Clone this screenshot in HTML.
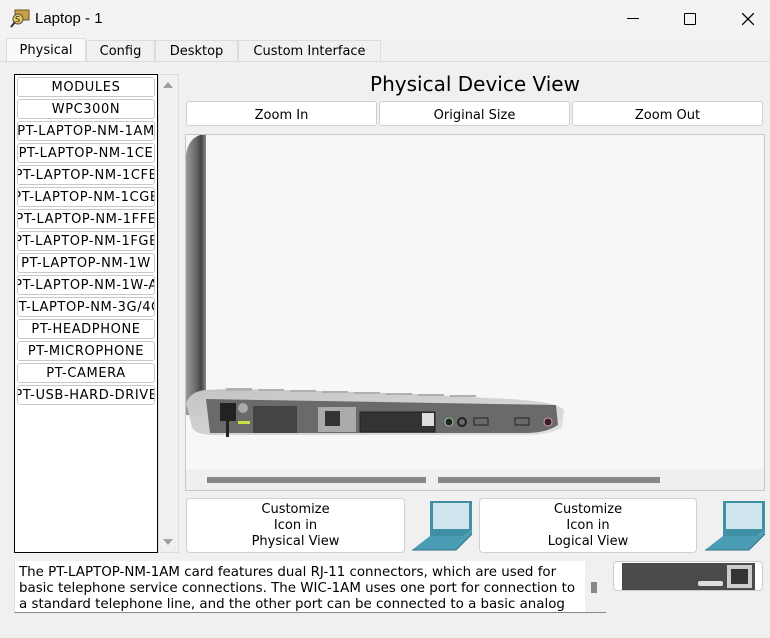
<!DOCTYPE html>
<html><head><style>
*{box-sizing:border-box;margin:0;padding:0}
body{width:770px;height:638px;background:#f0f0f0;font-family:"DejaVu Sans","Liberation Sans",sans-serif;position:relative;overflow:hidden;color:#000}
.a{position:absolute}
.title{left:0;top:0;width:770px;height:40px;background:#f3f3f3}
.tab{top:40px;height:22px;font-size:13px;text-align:center;line-height:21px;border:1px solid #dcdcdc;border-bottom:none;background:#f0f0f0;font-family:"DejaVu Sans",sans-serif}
.item{left:17px;width:138px;height:20px;border:1px solid #c8c8c8;border-radius:3px;background:#fff;font-size:13px;letter-spacing:0.6px;text-align:center;line-height:20px;white-space:nowrap;overflow:hidden;display:flex;justify-content:center}
.btn{height:25px;border:1px solid #d0d0d0;border-radius:3px;background:#fff;font-size:13px;text-align:center;line-height:27px}
.cbtn{height:55px;border:1px solid #d0d0d0;border-radius:4px;background:#fff;font-size:13px;text-align:center;line-height:16px;padding-top:3px}
</style></head><body>
<div class="a title"></div>
<svg class="a" style="left:10px;top:8px" width="22" height="22" viewBox="0 0 22 22"><rect x="5" y="2" width="14" height="10" fill="#c9a04a" stroke="#6b5420"/><circle cx="8" cy="11" r="5" fill="#e8c860" stroke="#555"/><line x1="5" y1="14" x2="1" y2="19" stroke="#333" stroke-width="2"/><text x="5" y="14" font-size="8" fill="#222" font-family="DejaVu Sans">S</text></svg>
<div class="a" style="left:35px;top:10px;font-size:15px;font-family:'Liberation Sans',sans-serif">Laptop - 1</div>
<div class="a" style="left:627px;top:18px;width:12px;height:1px;background:#000"></div>
<div class="a" style="left:684px;top:13px;width:12px;height:12px;border:1.3px solid #000;border-radius:1px"></div>
<svg class="a" style="left:742px;top:13px" width="12" height="12"><path d="M0 0L12 12M12 0L0 12" stroke="#000" stroke-width="1.3"/></svg>
<div class="a tab" style="left:6px;top:38px;height:24px;width:80px;background:#f9f9f9;line-height:24px">Physical</div>
<div class="a tab" style="left:86px;width:69px">Config</div>
<div class="a tab" style="left:155px;width:83px">Desktop</div>
<div class="a tab" style="left:238px;width:143px">Custom Interface</div>
<div class="a" style="left:0;top:61px;width:770px;height:1px;background:#dcdcdc"></div>

<div class="a" style="left:14px;top:74px;width:144px;height:479px;border:1px solid #000;background:#fff"></div>
<div class="a" style="left:158px;top:74px;width:21px;height:479px;background:#f0f0f0;border:1px solid #dcdcdc"></div>
<svg class="a" style="left:162px;top:81px" width="12" height="8"><path d="M1 7L6 1L11 7Z" fill="#a0a0a0"/></svg>
<svg class="a" style="left:162px;top:538px" width="12" height="8"><path d="M1 1L6 7L11 1Z" fill="#a0a0a0"/></svg>
<div class="a item" style="top:77px">MODULES</div>
<div class="a item" style="top:99px">WPC300N</div>
<div class="a item" style="top:121px">PT-LAPTOP-NM-1AM</div>
<div class="a item" style="top:143px">PT-LAPTOP-NM-1CE</div>
<div class="a item" style="top:165px">PT-LAPTOP-NM-1CFE</div>
<div class="a item" style="top:187px">PT-LAPTOP-NM-1CGE</div>
<div class="a item" style="top:209px">PT-LAPTOP-NM-1FFE</div>
<div class="a item" style="top:231px">PT-LAPTOP-NM-1FGE</div>
<div class="a item" style="top:253px">PT-LAPTOP-NM-1W</div>
<div class="a item" style="top:275px">PT-LAPTOP-NM-1W-A</div>
<div class="a item" style="top:297px">PT-LAPTOP-NM-3G/4G</div>
<div class="a item" style="top:319px">PT-HEADPHONE</div>
<div class="a item" style="top:341px">PT-MICROPHONE</div>
<div class="a item" style="top:363px">PT-CAMERA</div>
<div class="a item" style="top:385px">PT-USB-HARD-DRIVE</div>

<div class="a" style="left:186px;top:72px;width:578px;text-align:center;font-size:20px;font-family:'DejaVu Sans',sans-serif">Physical Device View</div>
<div class="a btn" style="left:186px;top:101px;width:191px">Zoom In</div>
<div class="a btn" style="left:379px;top:101px;width:191px">Original Size</div>
<div class="a btn" style="left:572px;top:101px;width:191px">Zoom Out</div>

<div class="a" style="left:185px;top:134px;width:580px;height:357px;border:1px solid #c8c8c8;background:#f7f7f7"></div>
<div class="a" style="left:186px;top:469px;width:578px;height:21px;background:#efefef"></div>
<div class="a" style="left:207px;top:477px;width:219px;height:6px;background:#888"></div>
<div class="a" style="left:438px;top:477px;width:222px;height:6px;background:#888"></div>
<svg class="a" style="left:186px;top:135px" width="380" height="302" viewBox="0 0 380 302">
<defs><linearGradient id="lid" x1="0" x2="1"><stop offset="0" stop-color="#999"/><stop offset=".5" stop-color="#6a6a6a"/><stop offset=".75" stop-color="#444"/><stop offset="1" stop-color="#888"/></linearGradient>
<linearGradient id="top" y1="0" y2="1"><stop offset="0" stop-color="#c4c4c4"/><stop offset="1" stop-color="#e0e0e0"/></linearGradient></defs>
<path d="M14 0L20 0L20 280L0 280L0 20Q2 4 14 0Z" fill="url(#lid)"/>
<path d="M0 268Q5 256 20 255L40 254Q220 257 300 263Q370 265 378 275L376 292Q366 300 340 300L30 300Q8 300 6 292Z" fill="url(#top)"/>
<path d="M40 256h26v-3h-26zM72 256h26v-2h-26zM104 257h26v-2h-26zM136 258h26v-2h-26zM168 259h26v-2h-26zM200 260h26v-2h-26zM232 261h26v-2h-26zM264 262h26v-2h-26z" fill="#b0b0b0"/>
<path d="M20 264L370 270L372 290Q360 298 340 298L24 298Z" fill="#6a6a6a"/>
<rect x="34" y="268" width="16" height="18" fill="#222"/>
<circle cx="57" cy="273" r="5" fill="#aaa"/><rect x="52" y="286" width="12" height="3" fill="#cde04a"/>
<rect x="67" y="271" width="44" height="27" fill="#444"/>
<rect x="132" y="272" width="38" height="25" fill="#aaa"/><rect x="139" y="276" width="15" height="15" fill="#333"/>
<rect x="174" y="277" width="75" height="20" fill="#333" stroke="#222"/><rect x="236" y="278" width="12" height="13" fill="#ddd"/>
<circle cx="263" cy="287" r="4" fill="#222" stroke="#9c9"/><circle cx="276" cy="287" r="4" fill="none" stroke="#222" stroke-width="2"/>
<rect x="288" y="283" width="14" height="7" fill="none" stroke="#222"/><rect x="329" y="283" width="14" height="7" fill="none" stroke="#222"/>
<circle cx="362" cy="287" r="4" fill="#322" stroke="#d9a"/>
<rect x="40" y="280" width="3" height="22" fill="#222"/>
</svg>

<div class="a cbtn" style="left:186px;top:498px;width:219px">Customize<br>Icon in<br>Physical View</div>
<div class="a cbtn" style="left:479px;top:498px;width:218px">Customize<br>Icon in<br>Logical View</div>
<svg class="a" style="left:410px;top:500px" width="64" height="52" viewBox="0 0 64 52"><path d="M20 1L62 1L62 30L54 36L20 36Z" fill="#3f8fa6"/><rect x="23" y="3" width="36" height="26" fill="#cfe6ee"/><path d="M20 36L54 36L62 30L62 34L46 50L2 50Z" fill="#4b9db5"/><path d="M2 50L46 50L62 34" stroke="#2f6f82" fill="none"/></svg>
<svg class="a" style="left:703px;top:500px" width="64" height="52" viewBox="0 0 64 52"><path d="M20 1L62 1L62 30L54 36L20 36Z" fill="#3f8fa6"/><rect x="23" y="3" width="36" height="26" fill="#cfe6ee"/><path d="M20 36L54 36L62 30L62 34L46 50L2 50Z" fill="#4b9db5"/><path d="M2 50L46 50L62 34" stroke="#2f6f82" fill="none"/></svg>

<div class="a" style="left:14px;top:561px;width:592px;height:52px;background:#fff;border-bottom:1px solid #888;border-left:1px solid #ddd"></div>
<div class="a" style="left:585px;top:561px;width:21px;height:51px;background:#f0f0f0"></div>
<div class="a" style="left:591px;top:582px;width:6px;height:11px;background:#888"></div>
<div class="a" style="left:19px;top:565px;font-size:13.4px;line-height:16px;white-space:nowrap">The PT-LAPTOP-NM-1AM card features dual RJ-11 connectors, which are used for<br>basic telephone service connections. The WIC-1AM uses one port for connection to<br>a standard telephone line, and the other port can be connected to a basic analog</div>

<div class="a" style="left:613px;top:561px;width:150px;height:30px;background:#fff;border:1px solid #ccc;border-radius:4px"></div>
<div class="a" style="left:622px;top:563px;width:133px;height:27px;background:#4a4a4a"></div>
<div class="a" style="left:727px;top:565px;width:25px;height:23px;background:#ccc"></div>
<div class="a" style="left:731px;top:569px;width:17px;height:15px;background:#333"></div>
<div class="a" style="left:698px;top:581px;width:25px;height:5px;background:#ddd;border-radius:2px"></div>
</body></html>
